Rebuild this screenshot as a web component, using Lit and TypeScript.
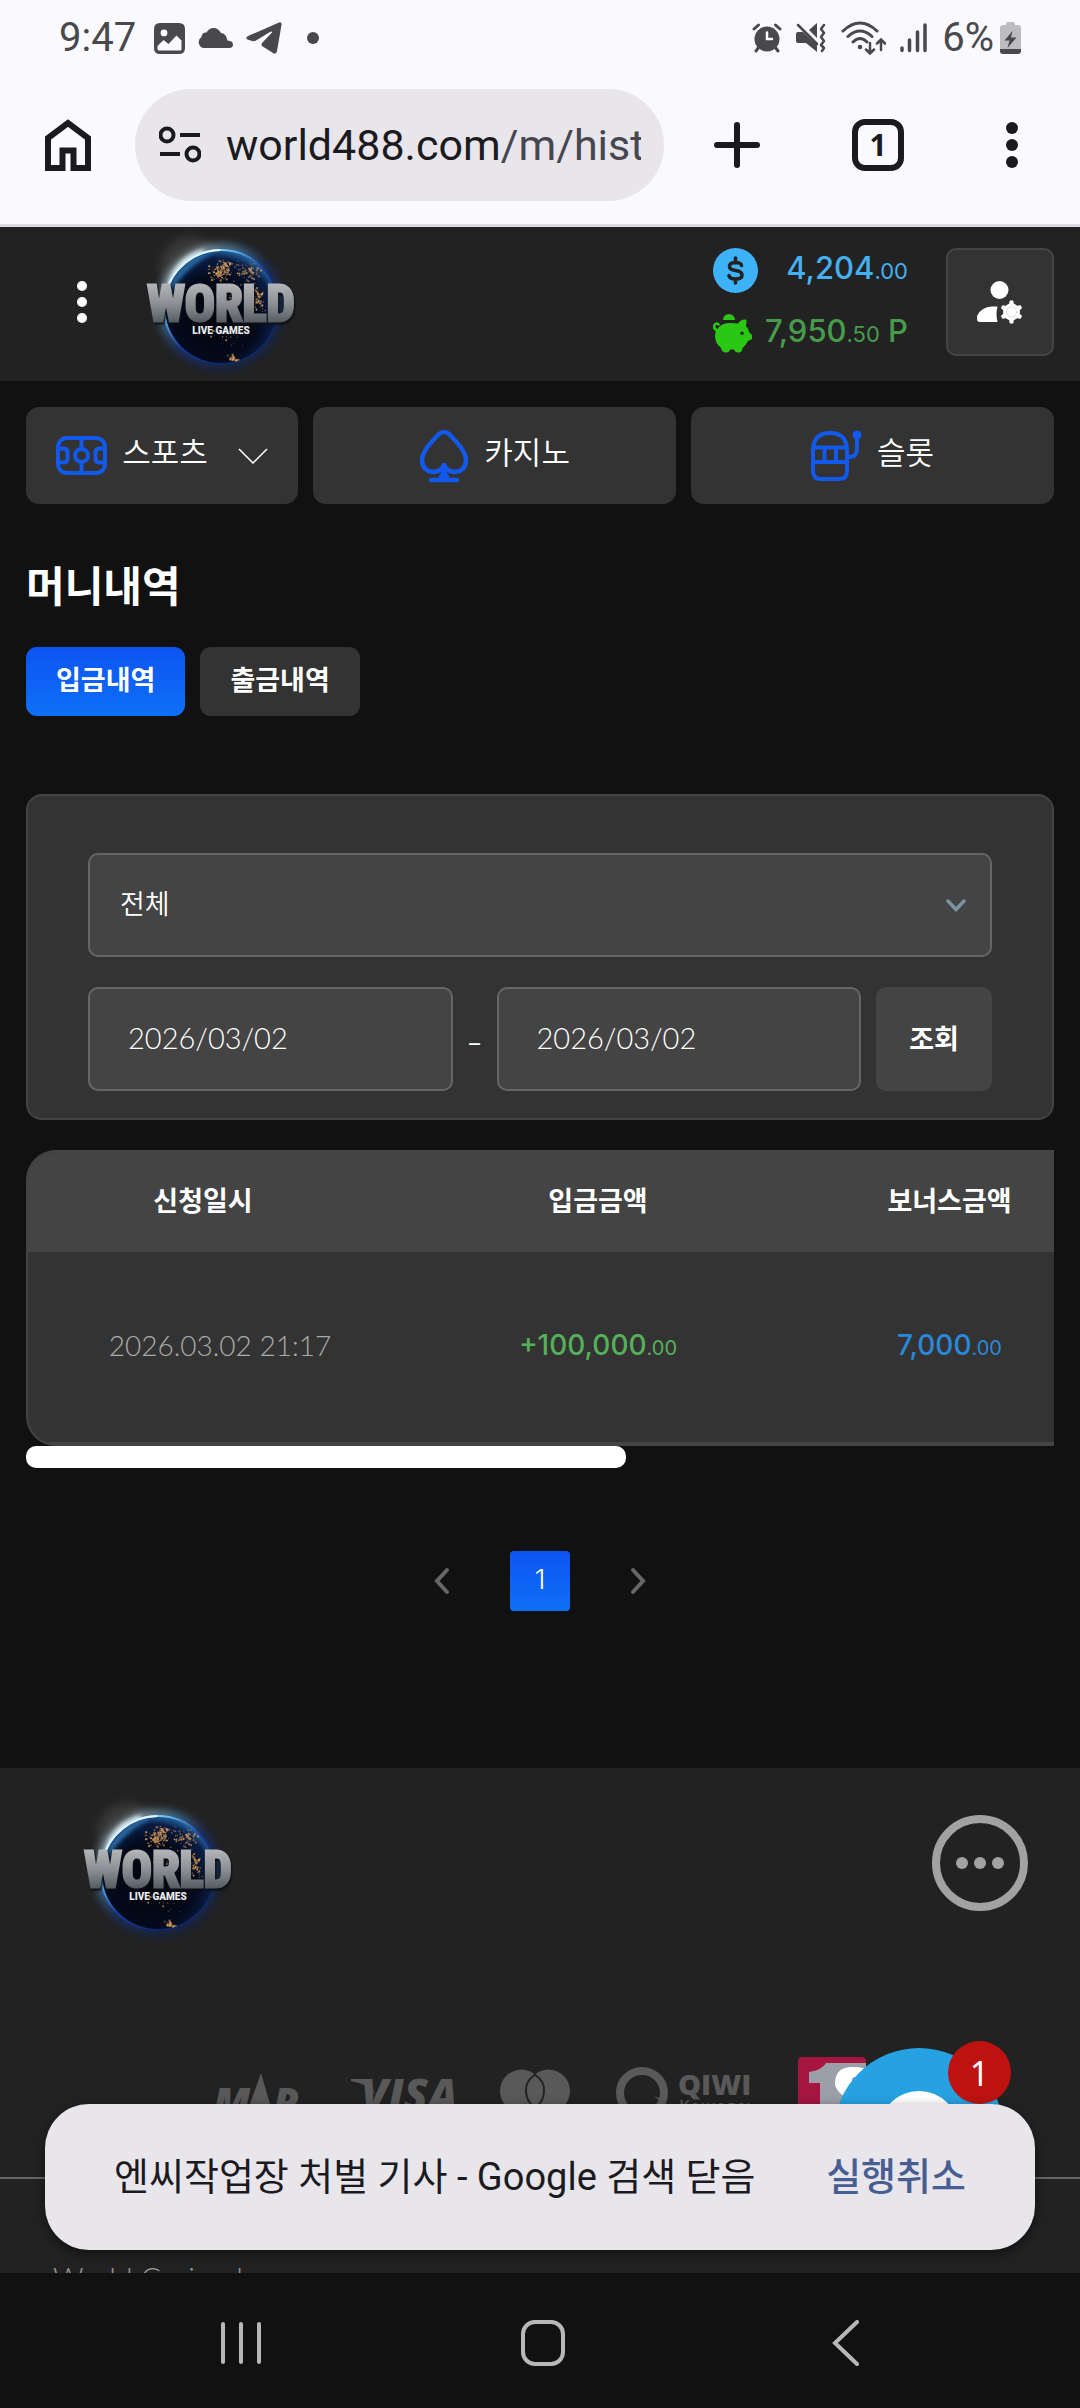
import { LitElement, html, svg, css } from "lit";
import { customElement, state } from "lit/decorators.js";

/* Deterministic scatter for the city lights on the globe. */
function cityLights(): { x: number; y: number; r: number; o: number }[] {
  let seed = 41;
  const rnd = () => {
    seed = (seed * 16807) % 2147483647;
    return seed / 2147483647;
  };
  const clusters = [
    { x: 84, y: 46, w: 13, h: 9, n: 110 },
    { x: 90, y: 38, w: 9, h: 6, n: 40 },
    { x: 112, y: 45, w: 16, h: 12, n: 70 },
    { x: 122, y: 72, w: 8, h: 14, n: 60 },
    { x: 94, y: 66, w: 18, h: 10, n: 25 },
    { x: 97, y: 131, w: 8, h: 4, n: 30 },
    { x: 88, y: 112, w: 20, h: 12, n: 14 },
  ];
  return clusters.flatMap((c) =>
    Array.from({ length: c.n }, () => ({
      x: c.x + (rnd() + rnd() - 1) * c.w,
      y: c.y + (rnd() + rnd() - 1) * c.h,
      r: 0.4 + rnd() * 0.8,
      o: 0.35 + rnd() * 0.6,
    }))
  );
}

@customElement("world-logo")
class WorldLogo extends LitElement {
  static styles = css`
    :host {
      display: block;
    }
    svg {
      display: block;
    }
    .word {
      font: bold 50px "Liberation Sans Narrow", "Roboto Condensed", Roboto, sans-serif;
      filter: drop-shadow(1px 2px 1px #0b0d10);
    }
    .tag {
      font: 900 10px Roboto, "Liberation Sans", sans-serif;
    }
  `;

  render() {
    return html`
      <svg width="170" height="150" viewBox="0 0 170 150" role="img" aria-label="World Live Games">
        <defs>
          <radialGradient id="globe" cx="0.45" cy="0.6" r="0.62">
            <stop offset="0" stop-color="#02040b" />
            <stop offset="0.6" stop-color="#040a1c" />
            <stop offset="0.85" stop-color="#0a1d44" />
            <stop offset="1" stop-color="#2a6fae" />
          </radialGradient>
          <linearGradient id="rim" x1="0.1" y1="0.1" x2="0.75" y2="0.8">
            <stop offset="0" stop-color="#e8fbff" />
            <stop offset="0.3" stop-color="#5fb4ec" />
            <stop offset="0.6" stop-color="#16399a" />
            <stop offset="1" stop-color="#0d2766" />
          </linearGradient>
          <linearGradient id="steel" x1="0" y1="0" x2="0" y2="1">
            <stop offset="0.15" stop-color="#b4b5b8" />
            <stop offset="0.5" stop-color="#8b8f93" />
            <stop offset="0.85" stop-color="#4f575c" />
          </linearGradient>
          <filter id="soft" x="-30%" y="-30%" width="160%" height="160%">
            <feGaussianBlur stdDeviation="5" />
          </filter>
          <filter id="tight" x="-30%" y="-30%" width="160%" height="160%">
            <feGaussianBlur stdDeviation="2" />
          </filter>
        </defs>
        <circle cx="54" cy="40" r="30" fill="#fff" opacity="0.1" filter="url(#soft)" />
        <circle cx="85" cy="80" r="58" fill="none" stroke="url(#rim)" stroke-width="8" opacity="0.7" filter="url(#soft)" />
        <path d="M33 66Q37 34 68 25Q46 30 33 66Z" stroke="#eafcff" stroke-width="5" fill="#fff" filter="url(#tight)" />
        <circle cx="85" cy="80" r="57" fill="url(#globe)" stroke="url(#rim)" stroke-width="2" />
        <path d="M31 70C33 48 52 28 78 25C60 35 44 48 31 70Z" fill="#3b90d2" opacity="0.7" filter="url(#tight)" />
        <path d="M30 66A57 57 0 0 1 84 23" fill="none" stroke="#dff6ff" stroke-width="2" />
        ${cityLights().map((d) => svg`<circle cx=${d.x} cy=${d.y} r=${d.r} fill="#d39a5c" opacity=${d.o} />`)}
        <text class="word" x="85" y="94" text-anchor="middle" fill="url(#steel)" stroke="url(#steel)" stroke-width="3">WORLD</text>
        <text class="tag" x="85" y="107" text-anchor="middle" fill="#e8eaec">LIVE GAMES</text>
      </svg>
    `;
  }
}

@customElement("app-root")
class AppRoot extends LitElement {
  @state() private tab = 0;

  static styles = css`
    :host {
      display: flex;
      flex-direction: column;
      height: 100vh;
      background: #111;
      color: #fff;
      font-family: Inter, "Noto Sans CJK KR", sans-serif;
      font-size: 27px;
    }
    * {
      box-sizing: border-box;
    }
    svg {
      display: block;
      flex: none;
    }
    button {
      font: inherit;
      color: inherit;
      background: none;
      border: 0;
      padding: 0;
      display: flex;
      align-items: center;
      justify-content: center;
      flex: none;
    }
    a {
      color: inherit;
      text-decoration: none;
    }

    /* phone status bar and browser toolbar */
    .chrome {
      background: #faf9fe;
      border-bottom: 3px solid #dddce3;
      flex: none;
    }
    .status {
      display: flex;
      align-items: center;
      justify-content: space-between;
      padding: 14px 59px 12px 59px;
      font-family: Roboto, sans-serif;
      font-size: 40px;
      line-height: 48px;
      color: #49494c;
    }
    .status div {
      display: flex;
      align-items: center;
      gap: 14px;
    }
    .status .left {
      gap: 13px;
    }
    .status .left svg:nth-of-type(1) {
      margin-left: 5px;
    }
    .charge {
      display: flex;
      align-items: center;
      gap: 6px;
    }
    .toolbar {
      display: flex;
      align-items: center;
      padding: 15px 62px 23px 45px;
      color: #1b1b1f;
    }
    .pill {
      flex: 1;
      min-width: 0;
      display: flex;
      align-items: center;
      gap: 25px;
      height: 112px;
      margin: 0 50px 0 44px;
      padding: 0 23px 0 24px;
      border-radius: 56px;
      background: #e8e6eb;
    }
    .url {
      flex: 1;
      overflow: hidden;
      white-space: nowrap;
      font-family: Roboto, sans-serif;
      font-size: 43px;
      line-height: 60px;
    }
    .path {
      color: #46464f;
    }
    .tabs-count {
      width: 52px;
      height: 52px;
      margin: 0 102px 0 92px;
      border: 6px solid #1b1b1f;
      border-radius: 13px;
      font-family: "Noto Sans", sans-serif;
      font-weight: 700;
      font-size: 30px;
      line-height: 40px;
    }

    /* web page */
    .page {
      flex: 1;
      min-height: 0;
      overflow: hidden;
      position: relative;
    }
    .header {
      display: flex;
      align-items: center;
      padding: 0 26px 4px 52px;
      background: #222;
    }
    .menu {
      width: 60px;
      height: 60px;
      margin-right: 24px;
    }
    .wallet {
      display: grid;
      gap: 18px;
      width: 195px;
      margin: 0 38px 0 auto;
      font-weight: 500;
      font-size: 31px;
      line-height: 36px;
    }
    .wallet div {
      display: flex;
      align-items: center;
      justify-content: space-between;
      height: 45px;
    }
    .wallet span {
      padding-bottom: 2px;
    }
    .cash {
      color: #45b0f0;
    }
    .points {
      color: #479c4c;
    }
    .wallet small {
      font-size: 22px;
      font-weight: 400;
    }
    .user {
      width: 108px;
      height: 108px;
      border: 2px solid #444;
      border-radius: 10px;
      background: #333;
    }
    .nav {
      display: grid;
      grid-template-columns: 3fr 4fr 4fr;
      gap: 15px;
      padding: 26px 26px 20px;
      font-size: 31px;
    }
    .nav a {
      display: flex;
      align-items: center;
      justify-content: center;
      gap: 15px;
      height: 97px;
      border-radius: 13px;
      background: #333;
      line-height: 40px;
    }
    .nav span {
      padding-bottom: 6px;
      font-weight: 350;
    }
    .nav .caret {
      margin-left: 15px;
    }
    .main {
      padding: 33px 26px 157px;
    }
    h1 {
      margin: 0 0 30px;
      font-size: 42px;
      line-height: 60px;
      font-weight: 700;
    }
    .tabs {
      display: flex;
      gap: 15px;
      margin-bottom: 78px;
    }
    .tab {
      height: 69px;
      padding: 0 30px 2px;
      border-radius: 11px;
      background: #333;
      font-weight: 700;
      line-height: 40px;
    }
    .tab.active,
    .current {
      background: linear-gradient(#0c54f2, #0f70f5);
    }
    .filter {
      display: grid;
      gap: 30px;
      padding: 57px 60px 27px;
      border: 2px solid #444;
      border-radius: 16px;
      background: #333;
    }
    .select {
      position: relative;
      display: block;
    }
    .select svg {
      position: absolute;
      right: 26px;
      top: 46px;
    }
    select,
    input {
      width: 100%;
      min-width: 0;
      height: 104px;
      margin: 0;
      border: 2px solid #666;
      border-radius: 10px;
      background: #444;
      color: #fff;
      appearance: none;
      display: block;
    }
    select {
      padding: 0 30px 4px;
      font: 350 27px/40px "Noto Sans CJK KR", sans-serif;
    }
    input {
      flex: 1;
      padding: 0 38px 3px;
      font: 300 29px/40px Lato, sans-serif;
    }
    .dates {
      display: flex;
      align-items: center;
    }
    .dash {
      width: 44px;
      padding-top: 4px;
      text-align: center;
      font-family: Lato, sans-serif;
      flex: none;
    }
    .search {
      width: 116px;
      height: 104px;
      margin-left: 15px;
      padding-bottom: 4px;
      border-radius: 10px;
      background: #444;
      font-weight: 700;
    }
    .sheet {
      margin-top: 30px;
      border: 2px solid #444;
      border-right: 0;
      border-radius: 30px 0 0 30px;
      overflow: hidden;
      background: #333;
    }
    table {
      width: 1759px;
      table-layout: fixed;
      border-collapse: collapse;
    }
    .c1 {
      width: 350px;
    }
    .c2 {
      width: 440px;
    }
    .c3 {
      width: 263px;
    }
    th {
      height: 100px;
      padding: 0 0 6px;
      background: #444;
      font-weight: 700;
    }
    td {
      height: 191px;
      padding: 0 0 4px;
      text-align: center;
      border-bottom: 2px solid #444;
      font-size: 28px;
      font-weight: 500;
    }
    td small {
      font-size: 20px;
      font-weight: 400;
    }
    td.when {
      padding-left: 34px;
      font-family: Lato, sans-serif;
      font-weight: 300;
      color: #aaa;
    }
    .plus {
      color: #55b059;
    }
    .bonus {
      color: #2b88d8;
    }
    .track {
      height: 22px;
    }
    .thumb {
      width: 58.4%;
      height: 100%;
      border-radius: 10px;
      background: #fff;
    }
    .pager {
      display: flex;
      justify-content: center;
      gap: 38px;
      margin-top: 83px;
      color: #666;
    }
    .pager button {
      width: 60px;
      height: 60px;
      border-radius: 4px;
    }
    .pager .current {
      padding-bottom: 4px;
      color: #fff;
      font-weight: 300;
    }

    .footer {
      background: #222;
    }
    .brand {
      display: flex;
      justify-content: space-between;
      align-items: flex-start;
      padding: 25px 52px 114px 73px;
    }
    .more {
      margin-top: 22px;
    }
    .payments {
      display: flex;
      justify-content: center;
      gap: 46px;
      padding-bottom: 50px;
      fill: #595959;
    }
    .payments text {
      font-family: "Open Sans", sans-serif;
      font-weight: 800;
    }
    .payments .sub {
      font-weight: 600;
    }
    .legal {
      margin: 0;
      border-top: 2px solid #666;
      padding: 78px 53px 40px;
      color: #999;
      font: 300 30px/40px Lato, sans-serif;
    }
    .chat {
      position: absolute;
      right: 76px;
      bottom: 55px;
    }
    .badge {
      position: absolute;
      right: -7px;
      top: -7px;
      width: 63px;
      height: 63px;
      border-radius: 50%;
      background: #bd1210;
      display: flex;
      align-items: center;
      justify-content: center;
      font: 34px/40px "Noto Sans", sans-serif;
    }
    .toast {
      position: absolute;
      left: 45px;
      right: 45px;
      bottom: 23px;
      height: 146px;
      display: flex;
      align-items: center;
      justify-content: space-between;
      padding: 0 69px;
      border-radius: 44px;
      background: #e8e6eb;
      box-shadow: 0 4px 12px rgba(0, 0, 0, 0.5);
      color: #1b1b1f;
      font: 38px/50px Roboto, "Noto Sans CJK KR", sans-serif;
    }
    .toast button {
      color: #485d92;
      font-weight: 500;
    }
    .system {
      flex: none;
      display: flex;
      justify-content: space-around;
      align-items: center;
      height: 135px;
      padding: 5px 84px 0 90px;
      background: #111;
    }
  `;

  private statusBar() {
    return html`
      <div class="status">
        <div class="left">
          <span>9:47</span>
          <svg width="31" height="31" viewBox="0 0 31 31">
            <path fill="#49494c" fill-rule="evenodd" d="M6 0H25Q31 0 31 6V25Q31 31 25 31H6Q0 31 0 25V6Q0 0 6 0ZM10 6.500A3.400 3.400 0 1 0 10 13.300A3.400 3.400 0 1 0 10 6.500ZM3.500 23V26Q3.500 27.500 5 27.500H26Q27.500 27.500 27.500 26V17.500L22.500 12.500L14.500 21L9.500 17Z" />
          </svg>
          <svg width="35" height="20" viewBox="0 0 35 20">
            <path fill="#49494c" d="M6 20A6 6 0 0 1 3.500 9Q4 4 8.500 4.500Q11 0 15.500 0Q20 0 23 5Q28 5 29.500 12.500Q35 13 35 16.500Q35 20 31 20Z" />
          </svg>
          <svg width="36" height="32" viewBox="0 0 36 32">
            <path fill="#49494c" d="M2 14L33 .5Q36-.5 35.500 3L31 29Q30 33 27 31L16 24Q15 22.500 16 21L26 10.500Q26 9 24 10L10 18.500Q8 19.500 6 19L1.500 17.500Q-1 16 2 14Z" />
          </svg>
          <svg width="38" height="12" viewBox="0 0 38 12"><circle cx="18" cy="6" r="6" fill="#49494c" /></svg>
        </div>
        <div>
          <svg width="30" height="30" viewBox="0 0 30 30" fill="none" stroke="#49494c" stroke-width="3" stroke-linecap="round">
            <circle cx="15" cy="16" r="12.500" fill="#49494c" stroke="none" />
            <path d="M2 6L6.500 2M28 6L23.500 2M4 28L7 24M26 28L23 24" />
            <path d="M15 9.500V16H20" stroke="#faf9fe" stroke-width="2.500" />
          </svg>
          <svg width="31" height="30" viewBox="0 0 31 30" fill="none" stroke="#49494c" stroke-width="2.500" stroke-linecap="round" stroke-linejoin="round">
            <path d="M0 11Q0 9 2 9H7L21 22V29L10 20H2Q0 20 0 18ZM13 7L21 0V15Z" fill="#49494c" stroke="none" />
            <path d="M2 2L21 21M28 2L25 6L28 10L25 14L28 18L25 22L28 25L26 28" />
          </svg>
          <svg width="45" height="34" viewBox="0 0 45 34" fill="none" stroke="#49494c" stroke-width="3" stroke-linecap="round">
            <path d="M2 10Q19-6 36 10M7 15.500Q19 4.500 31 15.500M12 21Q19 14 26 21" />
            <circle cx="19" cy="26" r="2.300" fill="#49494c" stroke="none" />
            <path d="M29 22V32M25 28.500L29 32.500L33 28.500M40 29V19M36 22.500L40 18.500L44 22.500" stroke-width="2.500" />
          </svg>
          <svg width="28" height="30" viewBox="0 0 28 30" stroke="#49494c" stroke-width="3.500" stroke-linecap="round">
            <path d="M2 25V27.500M9.500 17V27.500M17.500 9V27.500M25 2V27.500" />
          </svg>
          <span class="charge">
            6%
            <svg width="21" height="32" viewBox="0 0 21 32">
              <path d="M6 3Q6 0 8 0H13Q15 0 15 3H18Q21 3 21 6V27H0V6Q0 3 3 3Z" fill="#bdbcc0" />
              <path d="M0 27H21V29Q21 32 18 32H3Q0 32 0 29Z" fill="#49494c" />
              <path d="M12.500 9L4.500 18.500H9.500L7.500 26L16.500 15.500H11Z" fill="#49494c" />
            </svg>
          </span>
        </div>
      </div>
    `;
  }

  private toolbar() {
    return html`
      <div class="toolbar">
        <button aria-label="홈">
          <svg width="46" height="52" viewBox="0 0 46 52" fill="none" stroke="#1b1b1f" stroke-width="6">
            <path d="M3 49V19L23 4L43 19V49H28.500V31.500H17.500V49Z" />
          </svg>
        </button>
        <div class="pill">
          <svg width="42" height="38" viewBox="0 0 42 38" fill="none" stroke="#1b1b1f" stroke-width="4">
            <circle cx="8" cy="9" r="6.500" /><path d="M21 9H41M1 28H21" /><circle cx="34" cy="28" r="6.500" />
          </svg>
          <span class="url">world488.com<span class="path">/m/hist</span></span>
        </div>
        <button aria-label="새 탭">
          <svg width="46" height="46" viewBox="0 0 46 46" stroke="#1b1b1f" stroke-width="6" stroke-linecap="round">
            <path d="M23 3V43M3 23H43" />
          </svg>
        </button>
        <button class="tabs-count" aria-label="탭">1</button>
        <button aria-label="메뉴">
          <svg width="12" height="48" viewBox="0 0 12 48" fill="#1b1b1f">
            <circle cx="6" cy="7" r="6" /><circle cx="6" cy="24" r="6" /><circle cx="6" cy="41" r="6" />
          </svg>
        </button>
      </div>
    `;
  }

  private header() {
    return html`
      <header class="header">
        <button class="menu" aria-label="메뉴">
          <svg width="10" height="42" viewBox="0 0 10 42" fill="#fff">
            <circle cx="5" cy="5" r="5" /><circle cx="5" cy="21" r="5" /><circle cx="5" cy="37" r="5" />
          </svg>
        </button>
        <world-logo></world-logo>
        <div class="wallet">
          <div class="cash">
            <svg width="45" height="45" viewBox="0 0 45 45">
              <circle cx="22.500" cy="22.500" r="22.500" fill="#3db2f8" />
              <path d="M28.500 17.500Q28 14.500 22.500 14.500Q16.500 14.500 16.500 18.500Q16.500 21.500 22.500 22.500Q29 23.500 29 27Q29 31 22.500 31Q16.500 31 16 27.500M22.500 10V15M22.500 31V35" fill="none" stroke="#222" stroke-width="3.600" stroke-linecap="round" />
            </svg>
            <span>4,204<small>.00</small></span>
          </div>
          <div class="points">
            <svg width="39" height="39" viewBox="0 0 39 39" fill="#2ac714">
              <path d="M10 6A6 6 0 0 1 22 6Z" />
              <path d="M5 17Q0 15 1.500 11Q3 8.500 5.500 10.500" fill="none" stroke="#2ac714" stroke-width="2.500" stroke-linecap="round" />
              <path fill-rule="evenodd" d="M6 13Q10 9 17 9L25 9.500Q28 5 33 5.500Q34 6 33 12Q35 14 36 18L39 21V25L35 27Q33 31 29.500 34Q29 38.500 26 38.500Q22 39 21 35.500H17Q16.500 39 12 38.500Q9 38 8 34Q2 29 2 22Q2 16.500 6 13ZM29 17.500A1.800 1.800 0 1 0 29 21.100A1.800 1.800 0 1 0 29 17.500Z" />
            </svg>
            <span>7,950<small>.50</small> P</span>
          </div>
        </div>
        <button class="user" aria-label="내 정보">
          <svg width="46" height="44" viewBox="0 0 46 44" fill="#fff">
            <circle cx="22.500" cy="10" r="9" />
            <path d="M3 42Q0 42 0 39V36Q4 27 15 26.500H20.500Q18.500 34 20.500 42Z" />
            <circle cx="34.500" cy="32" r="8.500" />
            <path d="M34.500 22.500V41.500M26.500 27.500L42.500 36.500M42.500 27.500L26.500 36.500" stroke="#fff" stroke-width="4.500" stroke-linecap="round" />
            <circle cx="34.500" cy="32" r="5" fill="none" stroke="#aaa" stroke-dasharray="1 1.500" />
          </svg>
        </button>
      </header>
      <nav class="nav">
        <a href="#sports">
          <svg width="51" height="39" viewBox="0 0 51 39" fill="none" stroke="#1259ee" stroke-width="4">
            <rect x="2" y="2" width="47" height="35" rx="9" />
            <path d="M25.500 2V12.500M25.500 26.500V37M3 12.500H7Q11.500 12.500 11.500 16V23Q11.500 26.500 7 26.500H3M48 12.500H44Q39.500 12.500 39.500 16V23Q39.500 26.500 44 26.500H48" />
            <circle cx="25.500" cy="19.500" r="6.500" />
          </svg>
          <span>스포츠</span>
          <svg class="caret" width="30" height="16" viewBox="0 0 30 16" fill="none" stroke="#fff" stroke-width="1.500"><path d="M1 1L15 15L29 1" /></svg>
        </a>
        <a href="#casino">
          <svg width="50" height="54" viewBox="0 0 50 54" fill="none" stroke="#1259ee" stroke-width="4.500" stroke-linecap="round" stroke-linejoin="round">
            <path d="M25 36Q22 43 14.500 43Q3 42 3 30.500Q3 22 20 5Q25 1 30 5Q47 22 47 30.500Q47 42 35.500 43Q28 43 25 36Z" />
            <path d="M25 36V51M12 51H38M25 43L21 50H29Z" fill="#1259ee" />
          </svg>
          <span>카지노</span>
        </a>
        <a href="#slots">
          <svg width="51" height="52" viewBox="0 0 51 52" fill="none" stroke="#1259ee" stroke-width="4">
            <path d="M2 19Q3 3 19 3Q35 3 36 19V41Q36 49 28 49H10Q2 49 2 41ZM2 17.500H36M2 32H36M13.500 18V32M25 18V32M36 27H38Q46 27 46 19V6" />
            <circle cx="46" cy="5" r="4.500" fill="#1259ee" stroke="none" />
          </svg>
          <span>슬롯</span>
        </a>
      </nav>
    `;
  }

  private history() {
    return html`
      <main class="main">
        <h1>머니내역</h1>
        <div class="tabs">
          ${["입금내역", "출금내역"].map(
            (name, i) => html`<button class="tab ${this.tab === i ? "active" : ""}" @click=${() => (this.tab = i)}>${name}</button>`
          )}
        </div>
        <form class="filter" @submit=${(e: Event) => e.preventDefault()}>
          <label class="select">
            <select aria-label="구분"><option>전체</option></select>
            <svg width="20" height="13" viewBox="0 0 20 13" fill="none" stroke="#7b929f" stroke-width="3.500" stroke-linecap="round"><path d="M2 2L10 10.500L18 2" /></svg>
          </label>
          <div class="dates">
            <input type="text" aria-label="시작일" value="2026/03/02" />
            <span class="dash">–</span>
            <input type="text" aria-label="종료일" value="2026/03/02" />
            <button class="search">조회</button>
          </div>
        </form>
        <div class="sheet">
          <table>
            <colgroup>
              <col class="c1" /><col class="c2" /><col class="c3" /><col />
            </colgroup>
            <thead>
              <tr><th>신청일시</th><th>입금금액</th><th>보너스금액</th><th></th></tr>
            </thead>
            <tbody>
              <tr>
                <td class="when">2026.03.02 21:17</td>
                <td class="plus">+100,000<small>.00</small></td>
                <td class="bonus">7,000<small>.00</small></td>
                <td></td>
              </tr>
            </tbody>
          </table>
        </div>
        <div class="track"><div class="thumb"></div></div>
        <div class="pager">
          <button aria-label="이전">
            <svg width="16" height="28" viewBox="0 0 16 28" fill="none" stroke="currentColor" stroke-width="4" stroke-linecap="round"><path d="M13 3L3 14L13 25" /></svg>
          </button>
          <button class="current">1</button>
          <button aria-label="다음">
            <svg width="16" height="28" viewBox="0 0 16 28" fill="none" stroke="currentColor" stroke-width="4" stroke-linecap="round"><path d="M3 3L13 14L3 25" /></svg>
          </button>
        </div>
      </main>
    `;
  }

  private footer() {
    return html`
      <footer class="footer">
        <div class="brand">
          <world-logo></world-logo>
          <button class="more" aria-label="더보기">
            <svg width="96" height="96" viewBox="0 0 96 96" fill="#a2a2a2">
              <circle cx="48" cy="48" r="44" fill="none" stroke="#a2a2a2" stroke-width="8" />
              <circle cx="30" cy="48" r="6" /><circle cx="48" cy="48" r="6" /><circle cx="66" cy="48" r="6" />
            </svg>
          </button>
        </div>
        <div class="payments">
          <svg width="90" height="70" viewBox="0 0 90 70">
            <text x="-2" y="60" font-size="41" font-style="italic">M</text>
            <path d="M29 64L46 16L60 64H48L44 46L38 64Z" />
            <text x="58" y="60" font-size="41" font-style="italic">P</text>
          </svg>
          <svg width="103" height="70" viewBox="0 0 103 70">
            <path d="M0 22H15Q19 22 20 26L24 38Q18 27 0 24Z" />
            <text x="10" y="54" font-size="44" font-style="italic">VISA</text>
          </svg>
          <svg width="70" height="70" viewBox="0 0 70 70">
            <circle cx="21.500" cy="34" r="21.500" /><circle cx="48.500" cy="34" r="21.500" />
            <path d="M35 17.500Q25 25 26 34Q26 44 35 51Q44 44 44 34Q45 25 35 17.500Z" stroke="#222" stroke-width="2" />
          </svg>
          <svg width="136" height="70" viewBox="0 0 136 70">
            <circle cx="26" cy="36" r="22" fill="none" stroke="#595959" stroke-width="8" />
            <path d="M38 39Q46 41 49 47L46 52Q45 43 38 39Z" />
            <text x="62" y="38" font-size="29">QIWI</text>
            <text class="sub" x="63" y="55" font-size="17">Кошелек</text>
          </svg>
          <svg width="68" height="70" viewBox="0 0 68 70">
            <rect width="68" height="70" rx="4" fill="#a51540" />
            <path d="M11 15Q24 13 28 6H68V70H22V26H11Z" fill="#9b9fa8" />
            <path d="M37 25Q38 10 54 10Q68 10 68 14V42Q42 44 37 28Z" fill="#fff" />
            <path d="M54 33V23Q54 20 57 20Q60 20 60 23V33Z" fill="#9b9fa8" />
          </svg>
        </div>
        <p class="legal">World Casino l</p>
      </footer>
    `;
  }

  render() {
    return html`
      <div class="chrome">${this.statusBar()}${this.toolbar()}</div>
      <div class="page">
        ${this.header()} ${this.history()} ${this.footer()}
        <button class="chat" aria-label="채팅">
          <svg width="170" height="170" viewBox="0 0 170 170">
            <circle cx="85" cy="85" r="85" fill="#26a1e1" /><circle cx="85" cy="83" r="40" fill="#fff" />
          </svg>
          <span class="badge">1</span>
        </button>
        <div class="toast" role="status">
          <span>엔씨작업장 처벌 기사 - Google 검색 닫음</span>
          <button>실행취소</button>
        </div>
      </div>
      <div class="system">
        <button aria-label="최근 앱">
          <svg width="44" height="44" viewBox="0 0 44 44" stroke="#b8b8b8" stroke-width="4" stroke-linecap="round"><path d="M4 3V41M22 3V41M40 3V41" /></svg>
        </button>
        <button aria-label="홈 화면">
          <svg width="44" height="46" viewBox="0 0 44 46"><rect x="2" y="2" width="40" height="42" rx="12" fill="none" stroke="#b8b8b8" stroke-width="4" /></svg>
        </button>
        <button aria-label="뒤로">
          <svg width="44" height="46" viewBox="0 0 44 46" fill="none" stroke="#b8b8b8" stroke-width="4" stroke-linecap="round"><path d="M34 2L12 23L34 44" /></svg>
        </button>
      </div>
    `;
  }
}
